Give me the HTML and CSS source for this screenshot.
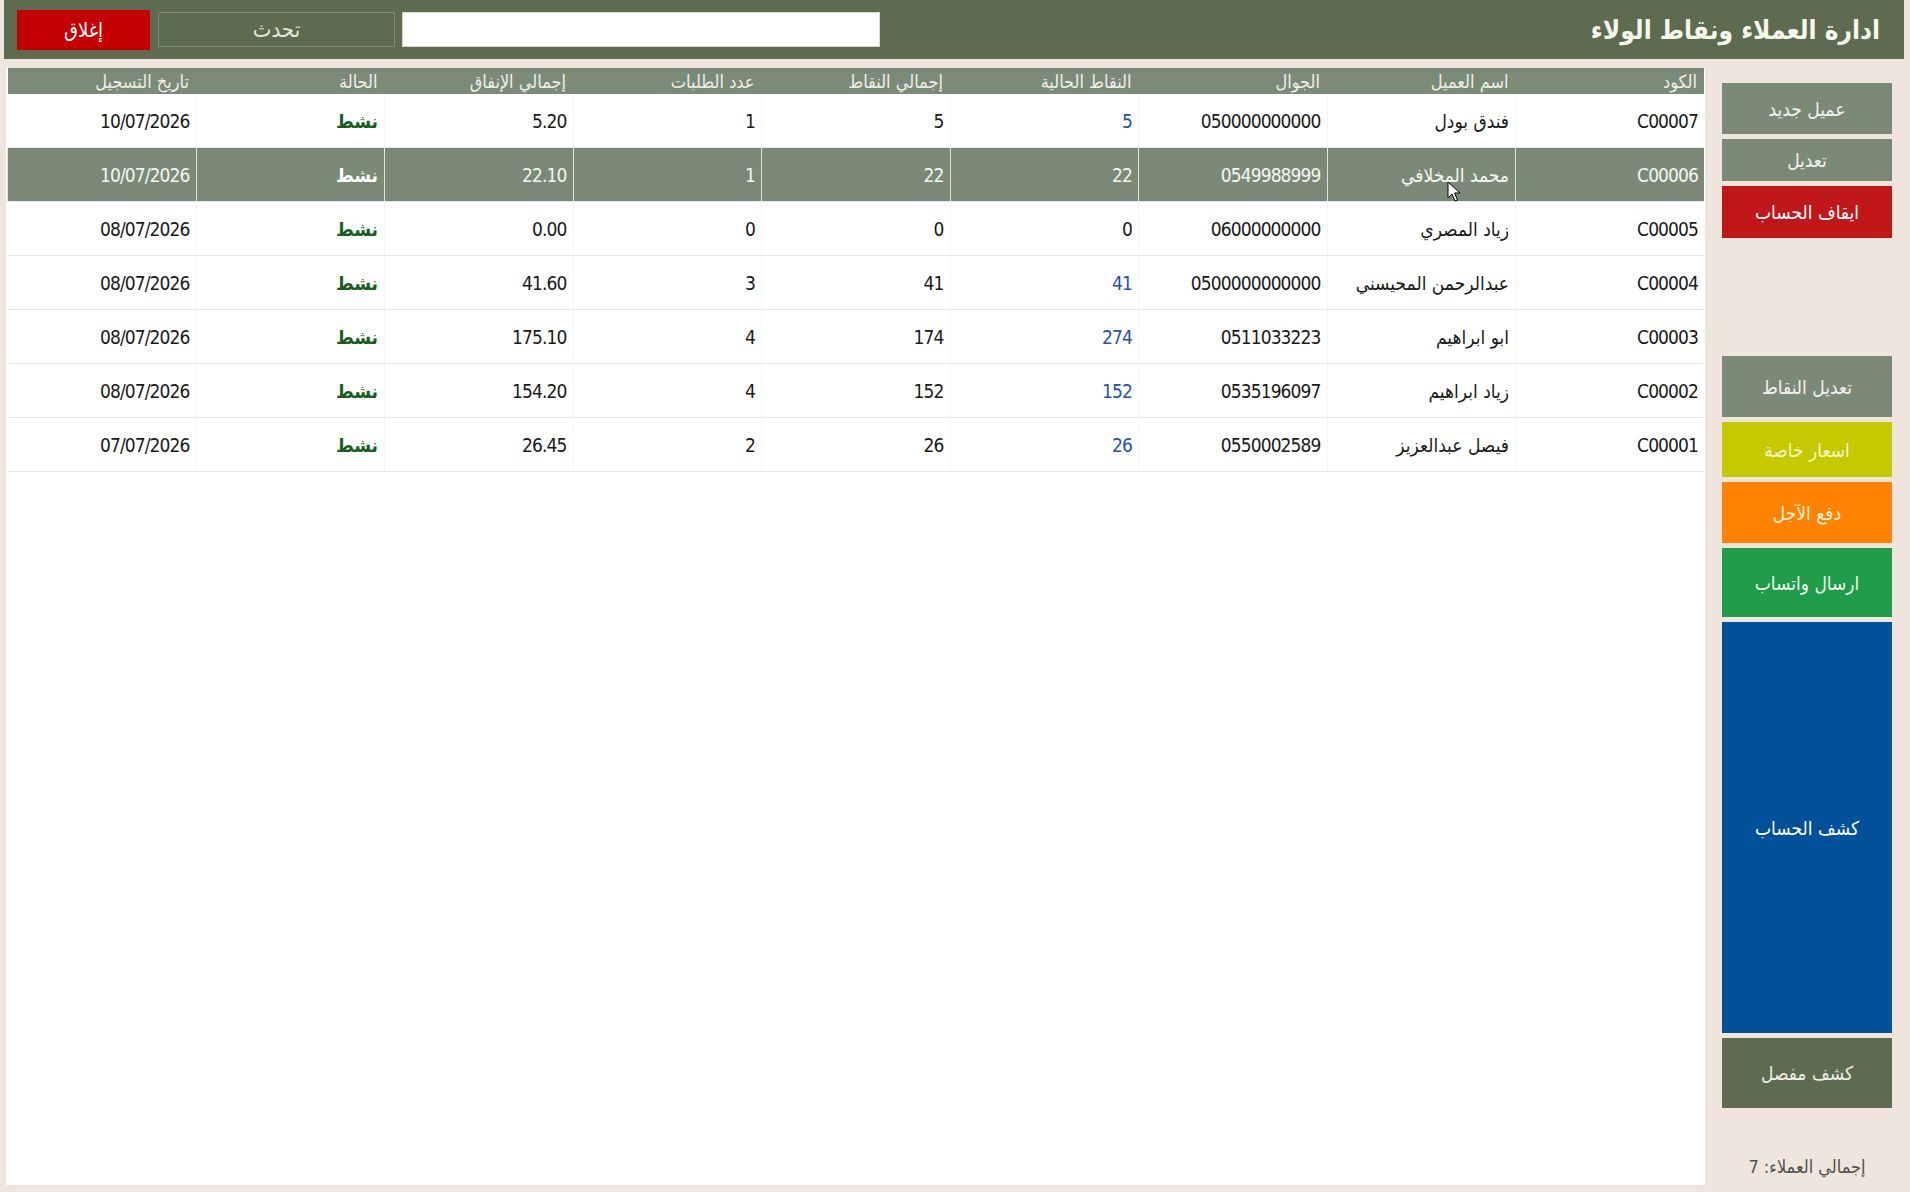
FILE: index.html
```html
<!DOCTYPE html>
<html lang="ar" dir="rtl">
<head>
  <meta charset="UTF-8" />
  <meta name="viewport" content="width=device-width, initial-scale=1.0"/>
  <title>ادارة العملاء ونقاط الولاء</title>
  <link rel="stylesheet" href="styles.css">
</head>
<body>
  <div class="topbar">
    <div class="title">ادارة العملاء ونقاط الولاء</div>
    <div class="controls">
      <input type="text" class="search" />
      <button class="btn-refresh">تحدث</button>
      <button class="btn-close">إغلاق</button>
    </div>
  </div>

  <div class="main">
    <div class="sidebar">
      <button class="side-btn gray h-new">عميل جديد</button>
      <button class="side-btn gray h-edit">تعديل</button>
      <button class="side-btn red h-stop">ايقاف الحساب</button>
      <div class="spacer"></div>
      <button class="side-btn gray h-points">تعديل النقاط</button>
      <button class="side-btn yellow h-prices">اسعار خاصة</button>
      <button class="side-btn orange h-pay">دفع الآجل</button>
      <button class="side-btn green h-wa">ارسال واتساب</button>
      <button class="side-btn blue h-statement">كشف الحساب</button>
      <button class="side-btn dark h-detail">كشف مفصل</button>
      <div class="total">إجمالي العملاء: 7</div>
    </div>

    <div class="panel">
      <table class="grid">
        <thead>
          <tr>
            <th>الكود</th>
            <th>اسم العميل</th>
            <th>الجوال</th>
            <th>النقاط الحالية</th>
            <th>إجمالي النقاط</th>
            <th>عدد الطلبات</th>
            <th>إجمالي الإنفاق</th>
            <th>الحالة</th>
            <th>تاريخ التسجيل</th>
          </tr>
        </thead>
        <tbody>
          <tr>
            <td>C00007</td><td class="name">فندق بودل</td><td>050000000000</td><td class="pts">5</td><td>5</td><td>1</td><td>5.20</td><td class="status">نشط</td><td>10/07/2026</td>
          </tr>
          <tr class="selected">
            <td>C00006</td><td class="name">محمد المخلافي</td><td>0549988999</td><td>22</td><td>22</td><td>1</td><td>22.10</td><td class="status">نشط</td><td>10/07/2026</td>
          </tr>
          <tr>
            <td>C00005</td><td class="name">زياد المصري</td><td>06000000000</td><td>0</td><td>0</td><td>0</td><td>0.00</td><td class="status">نشط</td><td>08/07/2026</td>
          </tr>
          <tr>
            <td>C00004</td><td class="name">عبدالرحمن المحيسني</td><td>0500000000000</td><td class="pts">41</td><td>41</td><td>3</td><td>41.60</td><td class="status">نشط</td><td>08/07/2026</td>
          </tr>
          <tr>
            <td>C00003</td><td class="name">ابو ابراهيم</td><td>0511033223</td><td class="pts">274</td><td>174</td><td>4</td><td>175.10</td><td class="status">نشط</td><td>08/07/2026</td>
          </tr>
          <tr>
            <td>C00002</td><td class="name">زياد ابراهيم</td><td>0535196097</td><td class="pts">152</td><td>152</td><td>4</td><td>154.20</td><td class="status">نشط</td><td>08/07/2026</td>
          </tr>
          <tr>
            <td>C00001</td><td class="name">فيصل عبدالعزيز</td><td>0550002589</td><td class="pts">26</td><td>26</td><td>2</td><td>26.45</td><td class="status">نشط</td><td>07/07/2026</td>
          </tr>
        </tbody>
      </table>
    </div>
  </div>

  <svg class="cursor" width="14" height="22" viewBox="0 0 14 22">
    <path d="M1 1 L1 17 L5 13 L8 20 L10.5 19 L7.5 12 L13 12 Z" fill="#ffffff" stroke="#000000" stroke-width="1" stroke-linejoin="round"/>
  </svg>
</body>
</html>
```

FILE: styles.css
```css
body {
  font-family: 'DejaVu Sans Condensed', 'DejaVu Sans', sans-serif;
  background: #efe5dd;
  margin: 0;
  width: 1910px;
  height: 1192px;
  overflow: hidden;
  position: relative;
}
.topbar {
  height: 59px;
  margin: 0 6px 0 4px;
  background: #5d6b50;
  display: flex;
  align-items: center;
  justify-content: space-between;
  padding: 0 24px 0 13px;
}
.title {
  font-size: 26px;
  font-weight: bold;
  color: #f6f6ef;
}
.controls {
  display: flex;
  align-items: center;
}
.search {
  width: 478px;
  height: 35px;
  box-sizing: border-box;
  border: 1px solid #d8d8d0;
  background: #ffffff;
  margin-left: 7px;
}
.btn-refresh {
  width: 237px;
  height: 35px;
  background: #5d6b50;
  border: 1px solid #7d8b70;
  color: #e4e6dc;
  font-family: inherit;
  font-size: 22px;
  margin-left: 8px;
}
.btn-close {
  width: 133px;
  height: 40px;
  background: #c40000;
  border: none;
  color: #ffffff;
  font-family: inherit;
  font-size: 20px;
}
.main {
  display: flex;
  margin-top: 9px;
  height: 1117px;
}
.sidebar {
  width: 170px;
  padding: 15px 18px 0 17px;
  display: flex;
  flex-direction: column;
  gap: 5px;
}
.side-btn {
  width: 170px;
  border: none;
  font-family: inherit;
  font-size: 19px;
  color: #f3f3ee;
  flex-shrink: 0;
}
.gray { background: #7b8a76; }
.red { background: #c01818; color: #ffffff; }
.yellow { background: #c6c800; color: #f4f4c8; }
.orange { background: #ff8200; color: #fff3dc; }
.green { background: #209c4a; color: #eef8ec; }
.blue { background: #00519a; color: #ffffff; }
.dark { background: #5d6b50; color: #f0f0ea; }
.h-new { height: 51px; }
.h-edit { height: 42px; }
.h-stop { height: 52px; }
.spacer { height: 108px; flex-shrink: 0; }
.h-points { height: 61px; }
.h-prices { height: 55px; }
.h-pay { height: 61px; }
.h-wa { height: 69px; }
.h-statement { height: 411px; }
.h-detail { height: 70px; }
.total {
  margin-top: auto;
  margin-bottom: 8px;
  text-align: center;
  font-size: 18px;
  color: #505050;
}
.panel {
  width: 1697px;
  margin-left: 6px;
  padding: 0 1px;
  background: #ffffff;
}
.grid {
  width: 1697px;
  border-collapse: collapse;
  table-layout: fixed;
}
.grid th {
  height: 26px;
  padding: 0 7px;
  background: #7c8b78;
  color: #eef0e8;
  font-size: 18px;
  font-weight: normal;
  text-align: right;
}
.grid td {
  height: 53px;
  padding: 0 6px;
  text-align: right;
  font-size: 19px;
  letter-spacing: -0.9px;
  color: #1a1a1a;
  border-bottom: 1px solid #e3e8ef;
  border-left: 1px solid #f3f5f7;
}
.grid td:last-child {
  border-left: none;
}
.grid td.name {
  letter-spacing: 0;
}
.grid td.pts {
  color: #2554a6;
}
.grid td.status {
  letter-spacing: 0;
  font-weight: bold;
  color: #17601c;
}
.grid tr.selected td {
  background: #7b8a76;
  color: #f4f6f2;
  border-left: 1px solid #dce3da;
}
.grid tr.selected td.status {
  color: #ffffff;
}
.cursor {
  position: absolute;
  left: 1447px;
  top: 181px;
}
```
